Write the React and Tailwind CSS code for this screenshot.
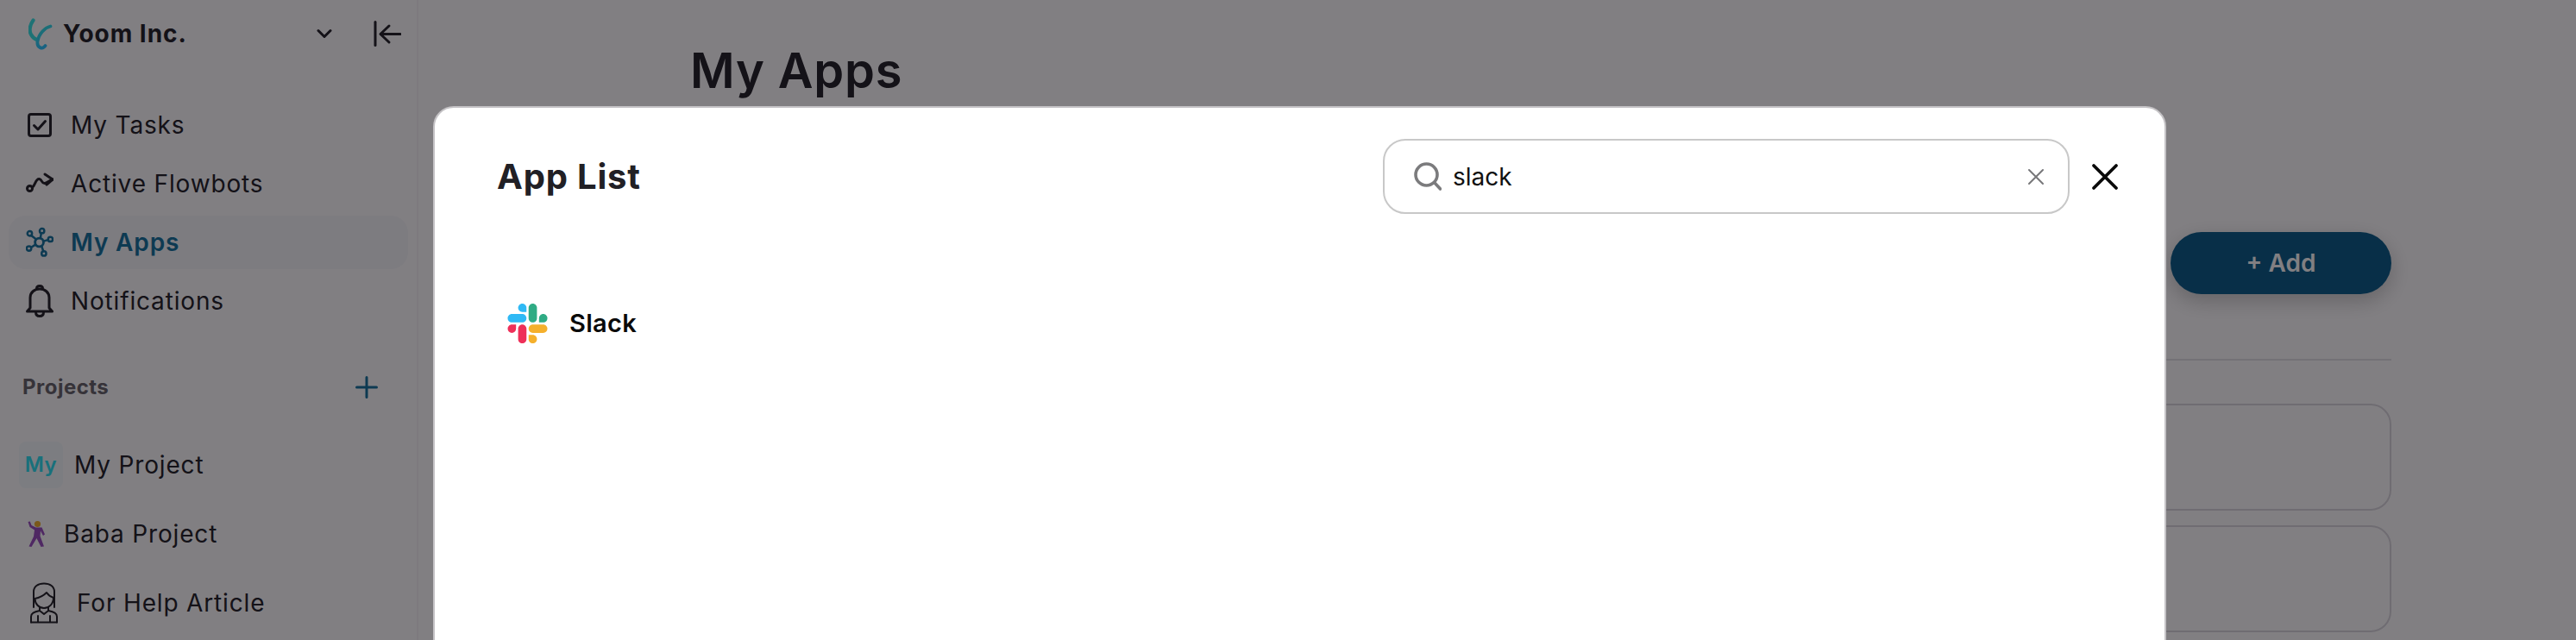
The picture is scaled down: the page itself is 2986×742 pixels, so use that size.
import React from "react";

const NAV = "#25242a";
const TEAL = "#17759f";

function LogoIcon() {
  return (
    <svg width="28" height="37" viewBox="0 0 28 37" fill="none" strokeLinecap="round">
      <defs>
        <linearGradient id="yoom" x1="0" y1="0" x2="0.4" y2="1">
          <stop offset="0" stopColor="#38e8e0" />
          <stop offset="1" stopColor="#2cc4ff" />
        </linearGradient>
      </defs>
      <path d="M5.5 2.5C1.5 8 0.5 15 3 19C4.5 22 7 24 9.5 25" stroke="#38e4e4" strokeWidth="4.2" />
      <path d="M25.5 9.5C19 11 12 18 10.5 27C9.5 34 16 37 19.5 32" stroke="url(#yoom)" strokeWidth="3.8" />
    </svg>
  );
}

function Chevron() {
  return (
    <svg width="18" height="12" viewBox="0 0 18 12" fill="none" stroke={NAV} strokeWidth="3" strokeLinecap="round" strokeLinejoin="round">
      <path d="M2 2.5L9 9.5L16 2.5" />
    </svg>
  );
}

function Collapse() {
  return (
    <svg width="32" height="30" viewBox="0 0 32 30" fill="none" stroke={NAV} strokeWidth="3" strokeLinecap="round" strokeLinejoin="round">
      <path d="M2 1.5V28.5" />
      <path d="M31 15.5H8.5" />
      <path d="M18 6L8 15.5L18 25" />
    </svg>
  );
}

function TaskIcon() {
  return (
    <svg width="32" height="32" viewBox="0 0 32 32" fill="none" stroke={NAV} strokeWidth="3" strokeLinecap="round" strokeLinejoin="round">
      <rect x="3.5" y="3.5" width="25" height="25" rx="2.5" />
      <path d="M9.5 16.5L14 21L22.5 11.5" />
    </svg>
  );
}

function FlowIcon() {
  return (
    <svg width="32" height="32" viewBox="0 0 32 32" fill="none" stroke={NAV} strokeWidth="3" strokeLinecap="round" strokeLinejoin="round">
      <circle cx="4.5" cy="21.5" r="3" />
      <path d="M7.5 20C11 18 11 10 15.5 10.5C19 11 18 16 22 15.5C25 15 28 12 31 11" />
      <path d="M22 5L31 11L24 17" />
    </svg>
  );
}

function AppsIcon() {
  return (
    <svg width="36" height="38" viewBox="0 0 36 38" fill="none" stroke={TEAL} strokeWidth="2.8" strokeLinecap="round">
      <circle cx="17.5" cy="19" r="5.5" strokeWidth="3.2" />
      <circle cx="21" cy="4" r="3" />
      <circle cx="5" cy="7.5" r="3" />
      <circle cx="32" cy="15" r="3" />
      <circle cx="4" cy="27" r="3" />
      <circle cx="23.5" cy="33.5" r="3" />
      <path d="M20 7L19 13.5M7 10L13.5 15M29 15.8L23 17.5M7 25.5L12.5 22M22.8 30.5L20.5 24" />
    </svg>
  );
}

function BellIcon() {
  return (
    <svg width="32" height="38" viewBox="0 0 32 38" fill="none" stroke={NAV} strokeWidth="3" strokeLinecap="round" strokeLinejoin="round">
      <path d="M5 27V15C5 9 10 5 16 5C22 5 27 9 27 15V27L30.5 31H1.5L5 27Z" />
      <path d="M12.5 4.5C12.5 2.5 14 1.5 16 1.5C18 1.5 19.5 2.5 19.5 4.5" />
      <path d="M11.5 32C11.5 35 13.5 36.5 16 36.5C18.5 36.5 20.5 35 20.5 32" />
    </svg>
  );
}

function PlusIcon() {
  return (
    <svg width="26" height="26" viewBox="0 0 26 26" fill="none" stroke={TEAL} strokeWidth="3" strokeLinecap="round">
      <path d="M13 1.5V24.5M1.5 13H24.5" />
    </svg>
  );
}

function Dancer() {
  return (
    <svg width="22" height="32" viewBox="0 0 22 32" fill="none">
      <path d="M1.5 2L3.5 8L9 11.5L8 19L2.5 30.5L5.5 31L11.5 21L16.5 31L20 30.5L15.5 18.5L16 12.5L19 18L21 16.5L17.5 8.5H10.5L5.5 6L3.8 1.5Z" fill="#9a50c0" />
      <circle cx="12.5" cy="4.5" r="3.6" fill="#f0b030" />
    </svg>
  );
}

function HelpIcon() {
  return (
    <svg width="34" height="48" viewBox="0 0 34 48" fill="none" stroke={NAV} strokeWidth="2" strokeLinecap="round" strokeLinejoin="round">
      <path d="M5 29V11C5 5 10 1.5 17 1.5C24 1.5 29 5 29 11V29" />
      <path d="M6.5 19C12 18 17 15 20 12C22 15 25 17 28 18C28 25 23 30 17 30C11 30 6.5 25 6.5 19Z" />
      <path d="M12 29V33L17 37L22 33V29" />
      <path d="M2 46.5V40C2 36 5 34.5 12 33M32 46.5V40C32 36 29 34.5 22 33" />
      <path d="M2 46.5H32M10 39V46.5M24 39V46.5" />
    </svg>
  );
}

function SearchIcon() {
  return (
    <svg width="32" height="33" viewBox="0 0 32 33" fill="none" stroke="#7b7b7d" strokeWidth="3.6" strokeLinecap="round">
      <circle cx="14.5" cy="14.5" r="12.5" />
      <path d="M24 24L30.5 31" />
    </svg>
  );
}

function SlackIcon() {
  return (
    <svg width="47" height="46" viewBox="0 0 122.8 122.8">
      <path d="M25.8 77.6c0 7.1-5.8 12.9-12.9 12.9S0 84.7 0 77.6s5.8-12.9 12.9-12.9h12.9v12.9z" fill="#ee3059" />
      <path d="M32.3 77.6c0-7.1 5.8-12.9 12.9-12.9s12.9 5.8 12.9 12.9v32.3c0 7.1-5.8 12.9-12.9 12.9s-12.9-5.8-12.9-12.9V77.6z" fill="#ee3059" />
      <path d="M45.2 25.8c-7.1 0-12.9-5.8-12.9-12.9S38.1 0 45.2 0s12.9 5.8 12.9 12.9v12.9H45.2z" fill="#2fb9f5" />
      <path d="M45.2 32.3c7.1 0 12.9 5.8 12.9 12.9s-5.8 12.9-12.9 12.9H12.9C5.8 58.1 0 52.3 0 45.2s5.8-12.9 12.9-12.9h32.3z" fill="#2fb9f5" />
      <path d="M97 45.2c0-7.1 5.8-12.9 12.9-12.9s12.9 5.8 12.9 12.9-5.8 12.9-12.9 12.9H97V45.2z" fill="#2fab84" />
      <path d="M90.5 45.2c0 7.1-5.8 12.9-12.9 12.9s-12.9-5.8-12.9-12.9V12.9C64.7 5.8 70.5 0 77.6 0s12.9 5.8 12.9 12.9v32.3z" fill="#2fab84" />
      <path d="M77.6 97c7.1 0 12.9 5.8 12.9 12.9s-5.8 12.9-12.9 12.9-12.9-5.8-12.9-12.9V97h12.9z" fill="#f5b02c" />
      <path d="M77.6 90.5c-7.1 0-12.9-5.8-12.9-12.9s5.8-12.9 12.9-12.9h32.3c7.1 0 12.9 5.8 12.9 12.9s-5.8 12.9-12.9 12.9H77.6z" fill="#f5b02c" />
    </svg>
  );
}

function NavRow({ icon, label, active }) {
  return (
    <div className={`flex h-[62px] items-center rounded-[20px] pl-[20px] ${active ? "bg-[#f6f8fb]" : ""}`}>
      <span className="flex w-[32px] shrink-0 items-center justify-center">{icon}</span>
      <span className={`ml-[20px] text-[28px] tracking-[0.03em] ${active ? "font-semibold text-[#17759f]" : "text-[#25242a]"}`}>{label}</span>
    </div>
  );
}

export default function App() {
  return (
    <div className="relative flex h-[742px] w-full overflow-hidden bg-white font-[Inter,sans-serif]">
      <aside className="flex w-[485px] shrink-0 flex-col border-r-2 border-[#f6f5f7]">
        <header className="flex h-[78px] items-center pl-[33px]">
          <LogoIcon />
          <span className="ml-[12px] text-[28px] font-bold tracking-[0.035em] text-[#25242a]">Yoom Inc.</span>
          <span className="ml-[150px] flex"><Chevron /></span>
          <span className="ml-[48px] flex"><Collapse /></span>
        </header>
        <nav className="mx-[10px] mt-[36px] flex w-[463px] flex-col gap-[6px]">
          <NavRow icon={<TaskIcon />} label="My Tasks" />
          <NavRow icon={<FlowIcon />} label="Active Flowbots" />
          <NavRow icon={<AppsIcon />} label="My Apps" active />
          <NavRow icon={<BellIcon />} label="Notifications" />
        </nav>
        <div className="mt-[56px] flex h-[26px] w-[438px] items-center justify-between pl-[26px]">
          <span className="text-[24px] font-bold tracking-[0.02em] text-[#69676d]">Projects</span>
          <PlusIcon />
        </div>
        <div className="mt-[37px] flex flex-col">
          <div className="flex h-[80px] items-center pl-[22px]">
            <span className="flex h-[54px] w-[51px] items-center justify-center rounded-[8px] bg-[#f4fafc] text-[24px] font-semibold tracking-[0.02em] text-[#2ce0f0]">My</span>
            <span className="ml-[13px] text-[28px] tracking-[0.03em] text-[#25242a]">My Project</span>
          </div>
          <div className="flex h-[80px] items-center pl-[31px]">
            <Dancer />
            <span className="ml-[21px] text-[28px] tracking-[0.03em] text-[#25242a]">Baba Project</span>
          </div>
          <div className="flex h-[80px] items-center pl-[34px]">
            <HelpIcon />
            <span className="ml-[21px] text-[28px] tracking-[0.03em] text-[#25242a]">For Help Article</span>
          </div>
        </div>
      </aside>

      <main className="flex min-w-0 flex-1 flex-col pl-[315px] pr-[214px]">
        <h1 className="mt-[48px] text-[56px] leading-[68px] font-semibold tracking-[0.015em] text-[#25242a]">My Apps</h1>
        <div className="mt-[153px] flex justify-end">
          <button className="flex h-[72px] w-[256px] items-center justify-center rounded-full bg-[#0c5f8a] text-[28px] font-semibold text-white shadow-[0_8px_24px_rgba(0,0,0,0.22)]">+ Add</button>
        </div>
        <div className="mt-[75px] h-[2px] w-full bg-[#e3e2e7]" />
        <div className="mt-[50px] h-[124px] rounded-[24px] border-2 border-[#dad9de]" />
        <div className="mt-[17px] h-[124px] rounded-[24px] border-2 border-[#dad9de]" />
      </main>

      <div className="absolute inset-0 bg-[rgba(3,0,5,0.5)] pl-[502px] pt-[123px]">
        <div className="flex h-[800px] w-[2009px] flex-col rounded-[24px] border-2 border-[#c4c2c5] bg-white">
          <div className="flex items-center pl-[72px] pt-[36px]">
            <h2 className="flex-1 text-[40px] font-bold tracking-[0.02em] text-[#212025]">App List</h2>
            <div className="flex h-[87px] w-[796px] items-center rounded-[26px] border-2 border-[#c8c8c8] pl-[34px]">
              <SearchIcon />
              <span className="ml-[13px] flex-1 text-[28px] text-[#111111]">slack</span>
              <svg className="mr-[27px]" width="20" height="20" viewBox="0 0 20 20" fill="none" stroke="#77777a" strokeWidth="2" strokeLinecap="round">
                <path d="M2 2L18 18M18 2L2 18" />
              </svg>
            </div>
            <svg className="ml-[25px] mr-[53px]" width="32" height="32" viewBox="0 0 32 32" fill="none" stroke="#0a0a0a" strokeWidth="3.8" strokeLinecap="round">
              <path d="M3 3L29 29M29 3L3 29" />
            </svg>
          </div>
          <div className="mt-[104px] flex items-center pl-[84px]">
            <SlackIcon />
            <span className="ml-[25px] text-[29px] font-semibold tracking-[0.01em] text-[#0a0a0a]">Slack</span>
          </div>
        </div>
      </div>
    </div>
  );
}
